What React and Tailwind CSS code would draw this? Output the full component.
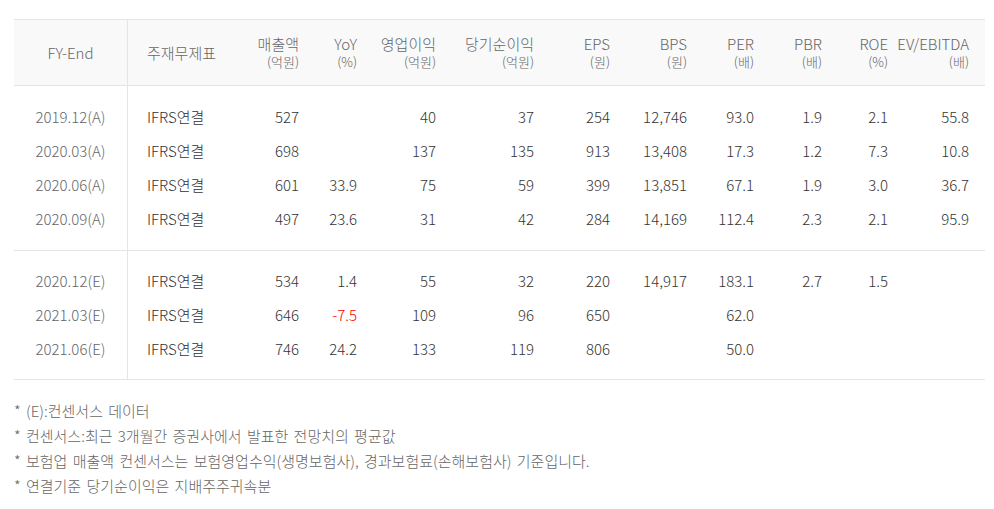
import React from "react";

const cols = [
  { w: "w-[114px]", align: "text-center" },
  { w: "w-[113px]", align: "text-left pl-[19px]" },
  { w: "w-[58px]", align: "text-right" },
  { w: "w-[58px]", align: "text-right" },
  { w: "w-[79px]", align: "text-right" },
  { w: "w-[98px]", align: "text-right" },
  { w: "w-[76px]", align: "text-right" },
  { w: "w-[77px]", align: "text-right" },
  { w: "w-[67px]", align: "text-right" },
  { w: "w-[68px]", align: "text-right" },
  { w: "w-[66px]", align: "text-right" },
  { w: "w-[97px]", align: "text-right pr-[16px]" },
];

const headers = [
  ["FY-End", null],
  ["주재무제표", null],
  ["매출액", "(억원)"],
  ["YoY", "(%)"],
  ["영업이익", "(억원)"],
  ["당기순이익", "(억원)"],
  ["EPS", "(원)"],
  ["BPS", "(원)"],
  ["PER", "(배)"],
  ["PBR", "(배)"],
  ["ROE", "(%)"],
  ["EV/EBITDA", "(배)"],
];

const actual = [
  ["2019.12(A)", "IFRS연결", "527", "", "40", "37", "254", "12,746", "93.0", "1.9", "2.1", "55.8"],
  ["2020.03(A)", "IFRS연결", "698", "", "137", "135", "913", "13,408", "17.3", "1.2", "7.3", "10.8"],
  ["2020.06(A)", "IFRS연결", "601", "33.9", "75", "59", "399", "13,851", "67.1", "1.9", "3.0", "36.7"],
  ["2020.09(A)", "IFRS연결", "497", "23.6", "31", "42", "284", "14,169", "112.4", "2.3", "2.1", "95.9"],
];

const estimate = [
  ["2020.12(E)", "IFRS연결", "534", "1.4", "55", "32", "220", "14,917", "183.1", "2.7", "1.5", ""],
  ["2021.03(E)", "IFRS연결", "646", "-7.5", "109", "96", "650", "", "62.0", "", "", ""],
  ["2021.06(E)", "IFRS연결", "746", "24.2", "133", "119", "806", "", "50.0", "", "", ""],
];

function Row({ r }) {
  return (
    <div className="flex h-[34px] items-center">
      {r.map((v, i) => {
        let color = "text-[#333]";
        if (i === 0) color = "text-[#666]";
        if (i === 3 && v.startsWith("-")) color = "text-[#ff0000]";
        return (
          <div
            key={i}
            className={`${cols[i].w} ${cols[i].align} ${color} shrink-0 h-full flex items-center ${
              i === 0 ? "justify-center border-r border-[#e5e5e5]" : i === 1 ? "justify-start" : "justify-end"
            }`}
          >
            {v}
          </div>
        );
      })}
    </div>
  );
}

function Group({ rows, pt, pb }) {
  return (
    <div className="flex flex-col">
      <div className={`flex ${pt}`}>
        <div className="w-[114px] border-r border-[#e5e5e5]" />
      </div>
      {rows.map((r, i) => (
        <Row key={i} r={r} />
      ))}
      <div className={`flex ${pb}`}>
        <div className="w-[114px] border-r border-[#e5e5e5]" />
      </div>
    </div>
  );
}

export default function App() {
  return (
    <div
      className="w-[994px] h-[509px] bg-white pt-[19px] px-[14px] text-[15px] font-light"
      style={{ fontFamily: '"Noto Sans CJK KR", "Noto Sans", sans-serif' }}
    >
      <div className="w-[971px] border-t border-b border-[#e5e5e5]">
        <div className="flex h-[66px] bg-[#f9f9f9] border-b border-[#e5e5e5] text-[#666]">
          {headers.map(([m, s], i) => (
            <div
              key={i}
              className={`${cols[i].w} ${cols[i].align} shrink-0 flex flex-col justify-center ${
                i === 0 ? "items-center border-r border-[#e5e5e5]" : i === 1 ? "items-start" : "items-end"
              }`}
            >
              <div className="leading-[18px]">{m}</div>
              {s && <div className="leading-[18px] text-[13px]">{s}</div>}
            </div>
          ))}
        </div>
        <div className="border-b border-[#e5e5e5]">
          <Group rows={actual} pt="h-[14px]" pb="h-[14px]" />
        </div>
        <Group rows={estimate} pt="h-[13px]" pb="h-[13px]" />
      </div>
      <div className="pt-[18px] text-[#666] text-[15px] leading-[25px] [word-spacing:2px]">
        <div>* (E):컨센서스 데이터</div>
        <div>* 컨센서스:최근 3개월간 증권사에서 발표한 전망치의 평균값</div>
        <div>* 보험업 매출액 컨센서스는 보험영업수익(생명보험사), 경과보험료(손해보험사) 기준입니다.</div>
        <div>* 연결기준 당기순이익은 지배주주귀속분</div>
      </div>
    </div>
  );
}
